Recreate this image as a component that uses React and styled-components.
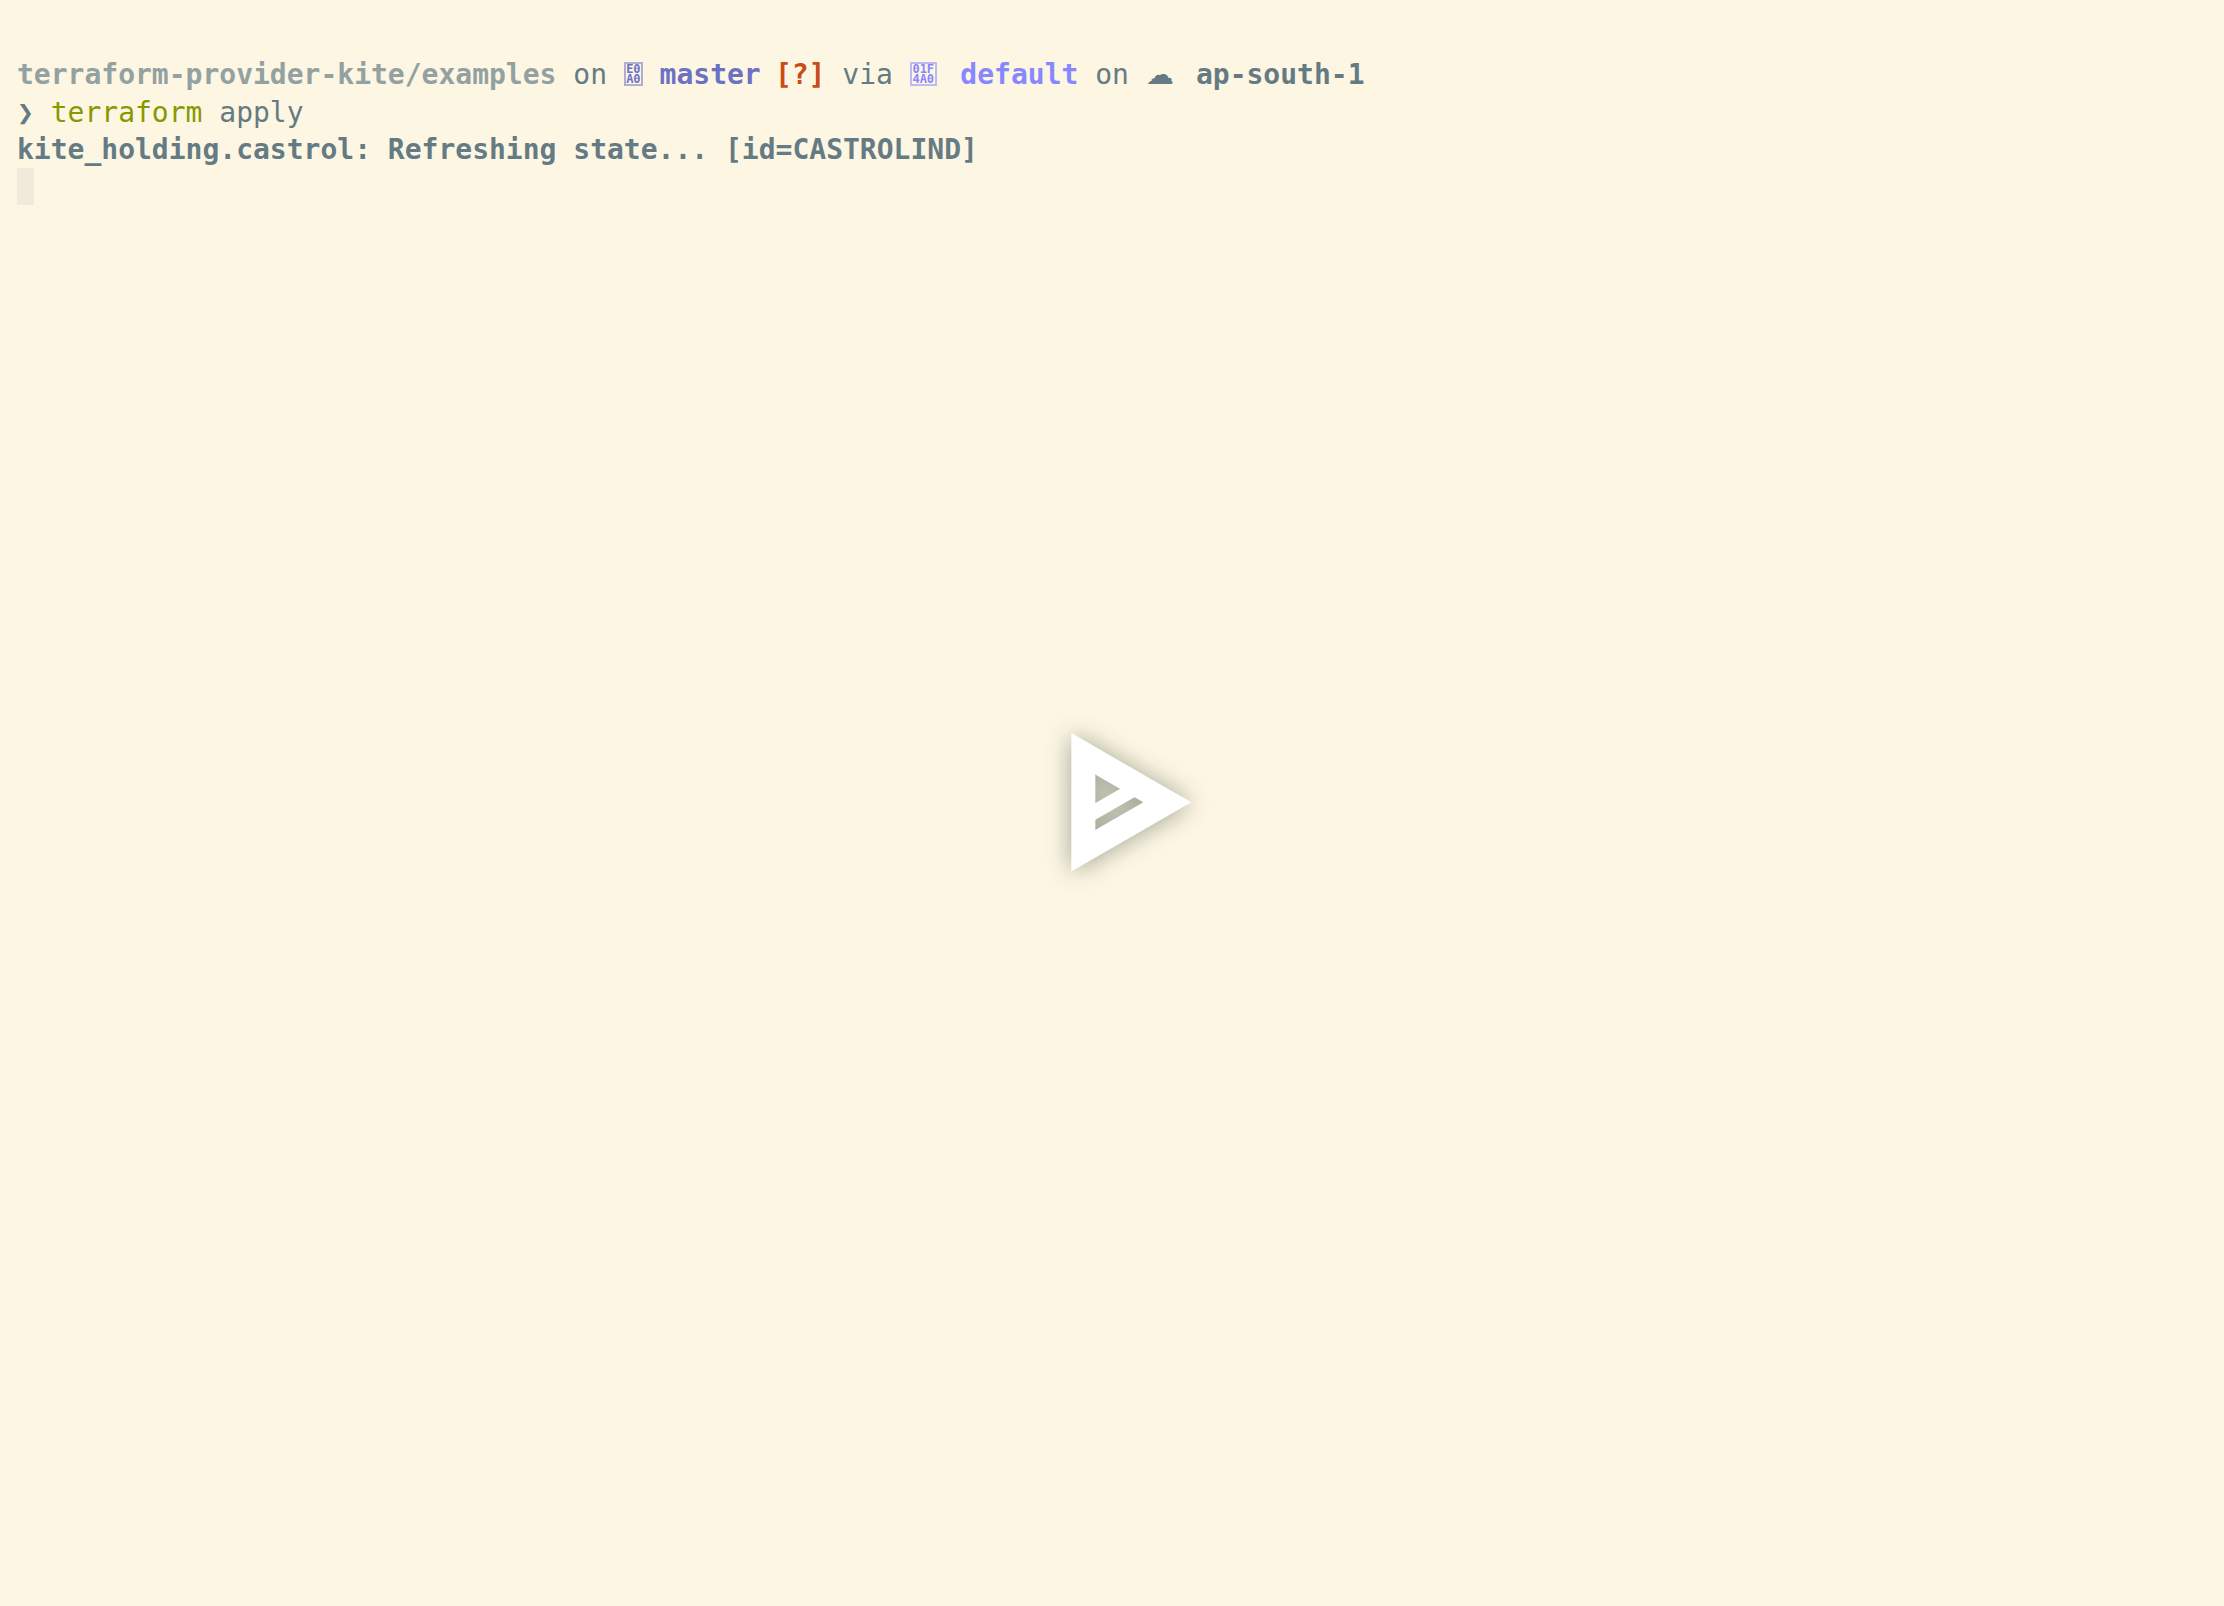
import React from "react";
import styled, { createGlobalStyle } from "styled-components";

const Global = createGlobalStyle`
  html, body { margin: 0; padding: 0; background: #fdf6e3; }
`;

const Player = styled.div`
  position: relative;
  width: 2224px;
  height: 1606px;
  overflow: hidden;
  background: #fdf6e3;
`;

const Terminal = styled.div`
  padding: 56.3px 0 0 17px;
  font-family: "DejaVu Sans Mono", monospace;
  font-size: 28px;
  line-height: 37.33px;
  color: #657b83;
  white-space: pre;
`;

const Line = styled.div`
  height: 37.33px;
`;

const Seg = styled.span`
  color: ${(p) => p.$color || "inherit"};
  font-weight: ${(p) => (p.$bold ? 700 : 400)};
  margin-left: ${(p) => p.$nudge || 0}px;
`;

const CloudGlyph = styled.span`
  display: inline-block;
  width: 16.4px;
  font-family: "DejaVu Sans", sans-serif;
`;

const HexBox = styled.span`
  display: inline-flex;
  flex-direction: column;
  align-items: center;
  justify-content: center;
  box-sizing: border-box;
  width: ${(p) => p.$w}px;
  height: 24px;
  margin-top: 6px;
  margin-right: ${(p) => p.$mr}px;
  border: 2px solid ${(p) => p.$color}88;
  color: ${(p) => p.$color};
  font-size: 12px;
  line-height: 10.5px;
  font-weight: 700;
  vertical-align: top;
`;

const Cursor = styled.div`
  width: 17px;
  height: 37px;
  background: #f0eadb;
`;

const Overlay = styled.div`
  position: absolute;
  inset: 0;
  display: flex;
  align-items: center;
  justify-content: center;
`;

const PlayIcon = styled.svg`
  width: 138.6px;
  height: 138.6px;
  margin-left: 39.4px;
  margin-bottom: 0.5px;
  overflow: visible;
  filter: drop-shadow(0 1px 12px rgba(0, 25, 15, 0.38));
`;

const Hex = ({ top, bottom, color, w, mr }) => (
  <HexBox $color={color} $w={w} $mr={mr}>
    <span>{top}</span>
    <span>{bottom}</span>
  </HexBox>
);

export default function App() {
  return (
    <Player>
      <Global />
      <Terminal>
        <Line>
          <Seg $bold $color="#93a1a1">terraform-provider-kite/examples</Seg>
          <Seg> on </Seg>
          <Hex top="E0" bottom="A0" color="#6c71c4" w={19} mr={16.7} />
          <Seg $bold $color="#6c71c4">master</Seg>
          <Seg> </Seg>
          <Seg $bold $nudge={-2.7} $color="#cb4b16">[?]</Seg>
          <Seg> via </Seg>
          <Hex top="01F" bottom="4A0" color="#8787ff" w={27} mr={23.6} />
          <Seg $bold $color="#8787ff">default</Seg>
          <Seg> on </Seg>
          <CloudGlyph>☁</CloudGlyph>
          <Seg>  </Seg>
          <Seg $bold>ap-south-1</Seg>
        </Line>
        <Line>
          <Seg $bold>❯</Seg>
          <Seg> </Seg>
          <Seg $color="#859900">terraform</Seg>
          <Seg> apply</Seg>
        </Line>
        <Line>
          <Seg $bold>kite_holding.castrol: Refreshing state... [id=CASTROLIND]</Seg>
        </Line>
        <Cursor />
      </Terminal>
      <Overlay>
        <PlayIcon viewBox="0 0 866.0254 866.0254" aria-hidden="true">
          <defs>
            <mask id="small-triangle-mask">
              <rect width="100%" height="100%" fill="white" />
              <polygon points="508.0127,433.0127 208.0127,259.8076 208.0127,606.2178" fill="black" />
            </mask>
          </defs>
          <polygon points="808.0127,433.0127 58.0127,0 58.0127,866.0254" mask="url(#small-triangle-mask)" fill="white" />
          <polyline points="481.2178,333.0127 134.8076,533.0127" stroke="white" strokeWidth="90" />
        </PlayIcon>
      </Overlay>
    </Player>
  );
}
